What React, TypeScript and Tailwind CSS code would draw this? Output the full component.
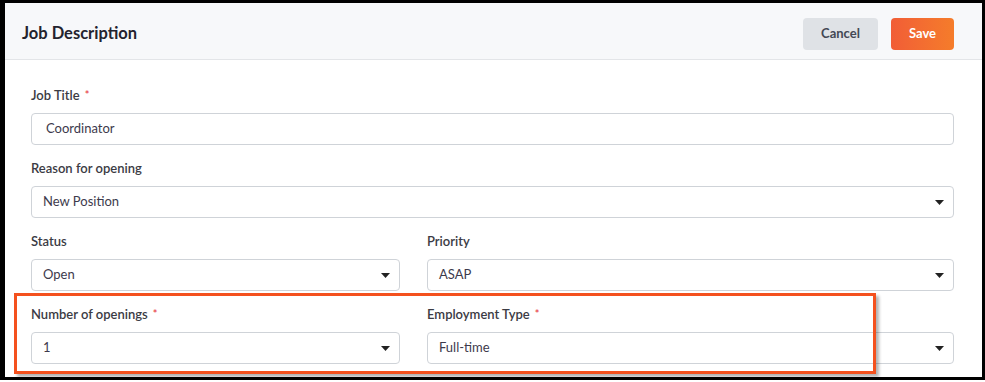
import React from 'react';

const font = { fontFamily: 'Lato, "Open Sans", "Liberation Sans", sans-serif' };

const Caret: React.FC = () => (
    <svg width="9" height="5" viewBox="0 0 9 5" className="shrink-0">
        <polygon points="0,0 9,0 4.5,5" fill="#222" />
    </svg>
);

const Label: React.FC<{ text: string; required?: boolean }> = ({ text, required }) => (
    <div className="h-4 leading-4 text-[13px] font-semibold text-[#3b3b44] mb-[10px]">
        {text}
        {required && <span className="text-[#e8454b] ml-[5px] text-[11px] align-top">*</span>}
    </div>
);

const TextInput: React.FC<{ value: string }> = ({ value }) => (
    <div className="h-8 rounded-[4px] border border-[#cfd3d8] bg-white flex items-center pl-[14px] text-[13px] text-[#3d3a4c]">
        {value}
    </div>
);

const Select: React.FC<{ value: string }> = ({ value }) => (
    <div className="h-8 rounded-[4px] border border-[#cfd3d8] bg-white flex items-center justify-between pl-[11px] pr-[9px] text-[13px] text-[#3d3a4c]">
        <span>{value}</span>
        <Caret />
    </div>
);

export default function App() {
    return (
        <div className="w-[985px] h-[382px] bg-white" style={font}>
            <div className="relative h-[380px] border-l-[5px] border-t-[3px] border-r-[3px] border-b-[3px] border-black flex flex-col">
                <div className="h-[57px] shrink-0 bg-[#f7f8fa] border-b border-[#e3e5e8] flex items-center justify-between pl-[17px] pr-[28px] pt-[5px]">
                    <h1 className="text-[16.5px] font-bold text-[#23232e]">Job Description</h1>
                    <div className="flex gap-[13px]">
                        <button className="w-[75px] h-8 rounded-[4px] bg-[#dfe2e6] text-[13px] font-bold text-[#434854]">Cancel</button>
                        <button className="w-[63px] h-8 rounded-[4px] bg-gradient-to-r from-[#f15d36] to-[#f57c2a] text-[13px] font-bold text-white">Save</button>
                    </div>
                </div>

                <div className="flex-1 pt-[27px] pl-[26px] pr-[28px] flex flex-col gap-[15px]">
                    <div>
                        <Label text="Job Title" required />
                        <TextInput value="Coordinator" />
                    </div>
                    <div>
                        <Label text="Reason for opening" />
                        <Select value="New Position" />
                    </div>
                    <div className="grid grid-cols-[369px_1fr] gap-x-[27px] gap-y-[15px]">
                        <div>
                            <Label text="Status" />
                            <Select value="Open" />
                        </div>
                        <div>
                            <Label text="Priority" />
                            <Select value="ASAP" />
                        </div>
                        <div>
                            <Label text="Number of openings" required />
                            <Select value="1" />
                        </div>
                        <div>
                            <Label text="Employment Type" required />
                            <Select value="Full-time" />
                        </div>
                    </div>
                </div>

                {/* highlight annotation */}
                <div className="absolute left-[9px] top-[290px] w-[862px] h-[81px] border-[3px] border-[#f4511e] shadow-[3px_3px_3px_rgba(0,0,0,0.3)] pointer-events-none" />
            </div>
        </div>
    );
}
